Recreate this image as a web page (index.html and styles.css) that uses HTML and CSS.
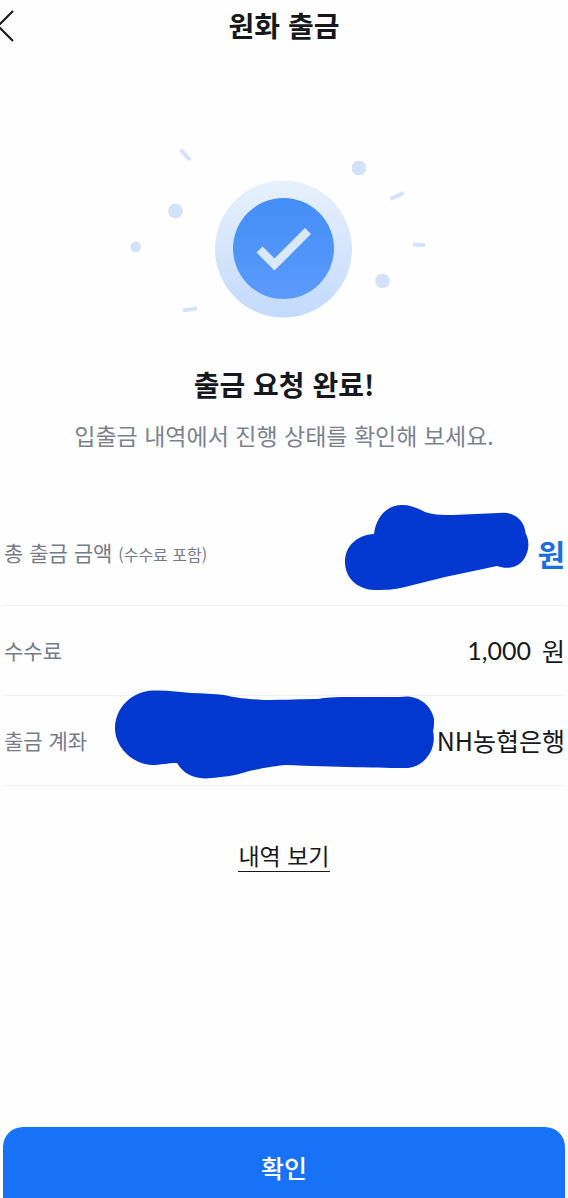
FILE: index.html
```html
<!DOCTYPE html>
<html lang="ko">
<head>
<meta charset="utf-8">
<meta name="viewport" content="width=device-width, initial-scale=1">
<title>원화 출금</title>
<link rel="stylesheet" href="styles.css">
</head>
<body>
<div class="page">
  <header class="topbar">
    <button class="back" type="button" aria-label="뒤로">
      <svg width="14" height="34" viewBox="0 0 14 34" fill="none" stroke="#16181b" stroke-width="2"><path d="M13 2 -2 17 13 32"/></svg>
    </button>
    <h1 class="title">원화 출금</h1>
  </header>

  <main class="content">
    <svg class="hero" width="320" height="190" viewBox="0 0 320 190" aria-hidden="true">
      <defs>
        <linearGradient id="ring" x1="0" y1="0" x2="0" y2="1"><stop offset="0" stop-color="#e8f1fd"/><stop offset="1" stop-color="#c2dafc"/></linearGradient>
        <linearGradient id="disc" x1="0" y1="0" x2="0" y2="1"><stop offset="0" stop-color="#438ef7"/><stop offset="1" stop-color="#5b9afb"/></linearGradient>
      </defs>
      <circle cx="163.500" cy="114" r="68.500" fill="url(#ring)"/>
      <circle cx="163.500" cy="113.500" r="50.500" fill="url(#disc)"/>
      <path d="M139.500 114.500 154.500 129.500 188 96" fill="none" stroke="#d9e8fd" stroke-width="8.500"/>
      <g fill="#d1e2fa">
        <circle cx="239" cy="33" r="7.300"/>
        <circle cx="55.500" cy="76" r="7.300"/>
        <circle cx="15.700" cy="112" r="5.400"/>
        <circle cx="262.500" cy="146" r="7.300"/>
      </g>
      <g stroke="#d1e2fa" stroke-width="3.800">
        <path d="M60.500 14.500 70 25M270.500 64 283.500 58M293 109.500 305 110M63 175.500 77 173.300"/>
      </g>
    </svg>

    <h2 class="headline">출금 요청 완료!</h2>
    <p class="lead">입출금 내역에서 진행 상태를 확인해 보세요.</p>

    <dl class="details">
      <div class="row row-total">
        <dt>총 출금 금액 <small>(수수료 포함)</small></dt>
        <dd class="total">
          <svg class="mask mask-amount" width="184" height="86" viewBox="0 0 184 86" aria-hidden="true"><path fill="#0338d0" d="M29 29C31 12 42 0 57 0C66 0 72 3 80 7C89 10 97 10 108 10L159 7.700C171 8 180 17 180.500 28C185 36 184 47 179 54C174 62 163 65 152 61L100 72L60 82C48 85 39 85 29 85C11 84 0 72 0 57C0 41 12 30 29 29Z"/></svg>
          원
        </dd>
      </div>
      <div class="row">
        <dt>수수료</dt>
        <dd><span class="figure">1,000</span><span class="unit">원</span></dd>
      </div>
      <div class="row">
        <dt>출금 계좌</dt>
        <dd>
          <svg class="mask mask-account" width="320" height="90" viewBox="0 0 320 90" aria-hidden="true"><path fill="#0338d0" d="M38 0.500C52 0 65 2 76 3C88 3 99 4 109 5C125 9 138 9 148 10C171 10 189 9 203 9C214 7 225 7 241 7L285 7C302 4 316 14 319 29C319 34 319 39 318 41C322 58 311 76 293 78C267 78 220 77 170 75C151 77 139 80 131 82C119 86 108 87 90 88.500C77 88 68 83 62 73C52 73 46 75 37 75C17 74 0 57 0 38C0 18 17 1 38 0.500Z"/></svg>
          NH농협은행
        </dd>
      </div>
    </dl>

    <a class="history" href="#">내역 보기</a>
  </main>

  <button class="confirm" type="button">확인</button>
</div>
</body>
</html>
```

FILE: styles.css
```css
* {
  box-sizing: border-box;
}

body {
  margin: 0;
  background: #fefefe;
  color: #16181b;
  font-family: "Noto Sans CJK KR", "Noto Sans", sans-serif;
}

.page {
  display: flex;
  flex-direction: column;
  min-height: 100vh;
  padding: 0 3px;
}

.topbar {
  display: grid;
  grid-template-columns: 40px 1fr 40px;
  align-items: center;
  height: 52px;
  margin: 0 -3px;
}

.back {
  display: flex;
  padding: 0;
  border: 0;
  background: none;
}

.title {
  margin: 0;
  padding-bottom: 2px;
  font-size: 28px;
  line-height: 40px;
  font-weight: 700;
  text-align: center;
}

.content {
  display: flex;
  flex-direction: column;
  align-items: center;
  padding-top: 83px;
}

.hero {
  max-width: 100%;
  margin-right: 8px;
}

.headline {
  margin: 39px 0 0;
  font-size: 28px;
  line-height: 40px;
  font-weight: 700;
}

.lead {
  margin: 14px 0 0;
  color: #7b828e;
  font-size: 23px;
  line-height: 34px;
  text-align: center;
}

.details {
  align-self: stretch;
  margin: 52px 0 0;
}

.row {
  display: flex;
  align-items: center;
  justify-content: space-between;
  min-height: 90px;
  padding: 0 0 1px 1px;
  border-bottom: 1px solid #eceff1;
}

.row-total {
  min-height: 102px;
  padding-bottom: 4px;
}

.row dt {
  color: #757c88;
  font-size: 21px;
  line-height: 32px;
}

.row small {
  font-size: 16px;
}

.row dd {
  position: relative;
  display: flex;
  gap: 11px;
  margin: 0;
  font-size: 25px;
  line-height: 36px;
}

.row .total {
  color: #1a6fe0;
  font-size: 30px;
  font-weight: 700;
}

.figure {
  font-family: Lato, "Noto Sans CJK KR", sans-serif;
}

.mask {
  position: absolute;
  right: 100%;
}

.mask-amount {
  top: -30px;
  margin-right: 8px;
}

.mask-account {
  top: -32px;
  margin-right: 2px;
}

.history {
  margin-top: 54px;
  border-bottom: 1px solid #16181b;
  color: inherit;
  font-size: 23px;
  line-height: 31px;
  text-decoration: none;
}

.confirm {
  margin-top: auto;
  padding: 22px 0 13px;
  border: 0;
  border-radius: 20px 20px 0 0;
  background: #1872f8;
  color: #fff;
  font-family: inherit;
  font-size: 25px;
  line-height: 36px;
  font-weight: 500;
}
```
